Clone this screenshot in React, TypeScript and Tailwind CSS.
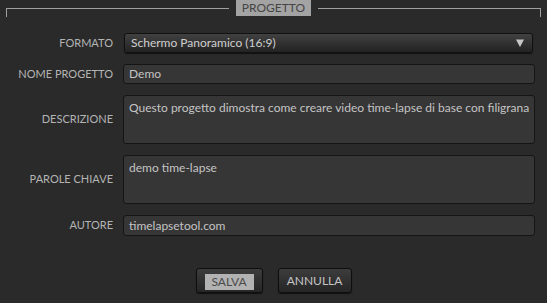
import React from "react";

const fieldBox =
  "bg-[#363636] border border-[#151515] rounded-[3px] text-[#c4c4c4] text-[12px] px-[5px]";

function Label({ children }: { children: React.ReactNode }) {
  return (
    <div className="flex items-center justify-end text-[11px] text-[#b4b4b4] uppercase whitespace-nowrap">
      {children}
    </div>
  );
}

export default function App() {
  return (
    <div
      className="w-[547px] h-[303px] bg-[#2a2a2a] overflow-hidden"
      style={{ fontFamily: "Lato, 'Open Sans', sans-serif" }}
    >
      {/* fieldset header */}
      <div className="flex items-start px-[6px]">
        <div className="flex-1 mt-[8px] h-[9px] border-t border-l border-[#a0a0a0]" />
        <div className="mx-[7px] w-[75px] h-[16px] bg-[#a3a3a3] text-[#454545] text-[12px] leading-[16px] text-center">
          PROGETTO
        </div>
        <div className="flex-1 mt-[8px] h-[9px] border-t border-r border-[#a0a0a0]" />
      </div>

      <div className="grid grid-cols-[113px_1fr] gap-x-[10px] gap-y-[11px] pr-[17px] mt-[16px]">
        <Label>Formato</Label>
        <div className="ml-px mr-[2px] h-[20px] flex items-center justify-between rounded-[3px] border border-[#111] bg-gradient-to-b from-[#414141] to-[#232323] pl-[6px] pr-[8px] text-[12px] text-[#cfcfcf] shadow-[0_1px_1px_rgba(0,0,0,0.6)]">
          <span>Schermo Panoramico (16:9)</span>
          <svg width="8" height="8" viewBox="0 0 8 8">
            <path d="M0 0.5 H8 L4 8 Z" fill="#c8c8c8" />
          </svg>
        </div>

        <Label>Nome progetto</Label>
        <div className={`${fieldBox} h-[20px] flex items-center`}>Demo</div>

        <Label>Descrizione</Label>
        <div className={`${fieldBox} h-[49px] pt-[3px] whitespace-nowrap`}>
          Questo progetto dimostra come creare video time-lapse di base con filigrana
        </div>

        <Label>Parole chiave</Label>
        <div className={`${fieldBox} h-[49px] pt-[3px]`}>demo time-lapse</div>

        <Label>Autore</Label>
        <div className={`${fieldBox} h-[21px] flex items-center`}>timelapsetool.com</div>
      </div>

      <div className="flex justify-center gap-[15px] mt-[32px]">
        <button className="w-[67px] h-[25px] flex items-center justify-center rounded-[3px] border border-[#0e0e0e] bg-gradient-to-b from-[#3d3d3d] to-[#262626] shadow-[0_1px_1px_rgba(0,0,0,0.6)]">
          <span className="bg-[#b2b2b2] text-[#4a4a4a] text-[12px] leading-[16px] w-[49px] mt-[2px] text-center">
            SALVA
          </span>
        </button>
        <button className="w-[74px] h-[25px] flex items-center justify-center rounded-[3px] border border-[#0e0e0e] bg-gradient-to-b from-[#3d3d3d] to-[#262626] text-[#c4c4c4] text-[12px] shadow-[0_1px_1px_rgba(0,0,0,0.6)]">
          ANNULLA
        </button>
      </div>
    </div>
  );
}
